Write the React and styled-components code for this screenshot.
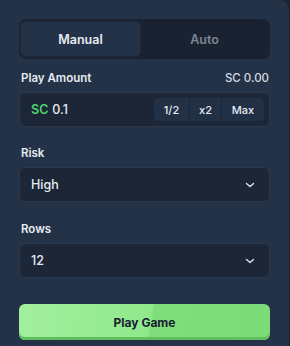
import React, { useState } from "react";
import styled, { createGlobalStyle } from "styled-components";

const GlobalStyle = createGlobalStyle`
  html, body {
    margin: 0;
    padding: 0;
    background: #1b2435;
    font-family: Inter, "Noto Sans", sans-serif;
  }
  * { box-sizing: border-box; }
`;

const Panel = styled.div`
  width: 289px;
  height: 346px;
  background: #243248;
  border-top-right-radius: 10px;
  padding: 19px 19px 0 19px;
  display: flex;
  flex-direction: column;
`;

const Tabs = styled.div`
  display: flex;
  height: 40px;
  padding: 2px 2px 2px 1px;
  background: #1a2231;
  border-radius: 7px;
`;

const Tab = styled.button`
  flex: ${p => (p.active ? "0 0 121px" : "1")};
  border: none;
  border-radius: 6px;
  background: ${p => (p.active ? "#243248" : "transparent")};
  box-shadow: ${p => (p.active ? "inset 0 0 0 1px #1e293a" : "none")};
  color: ${p => (p.active ? "#e6ebf2" : "#7b8596")};
  font-family: inherit;
  font-size: 12.5px;
  font-weight: 600;
  cursor: pointer;
`;

const LabelRow = styled.div`
  display: flex;
  justify-content: space-between;
  align-items: center;
  height: 14px;
  line-height: 14px;
  margin-top: ${p => p.top || 12}px;
  margin-bottom: 7px;
  padding: 0 1px 0 2px;
  color: #e6ebf2;
  font-size: 11.5px;
  font-weight: 600;
`;

const Balance = styled.span`
  color: #d3d9e2;
  font-weight: 500;
`;

const InputBox = styled.div`
  display: flex;
  align-items: center;
  justify-content: space-between;
  height: 35px;
  padding: 0 5px 0 11px;
  background: #1c2637;
  border: 1px solid #2a384d;
  border-radius: 6px;
  color: #e6ebf2;
  font-size: 12.5px;
  font-weight: 500;
`;

const Currency = styled.span`
  color: #4fd06b;
  font-weight: 600;
  margin-right: 4px;
`;

const Chips = styled.div`
  display: flex;
  height: 23px;
  background: #223045;
  border-radius: 5px;
  overflow: hidden;
`;

const Chip = styled.button`
  width: ${p => p.w}px;
  border: none;
  border-left: ${p => (p.first ? "none" : "1px solid #1c2637")};
  background: transparent;
  color: #e6ebf2;
  font-family: inherit;
  font-size: 11px;
  font-weight: 500;
  cursor: pointer;
`;

const Select = styled.div`
  display: flex;
  align-items: center;
  justify-content: space-between;
  height: 35px;
  padding: 0 14px 0 11px;
  background: #1c2637;
  border: 1px solid #2a384d;
  border-radius: 6px;
  color: #e6ebf2;
  font-size: 12.5px;
  font-weight: 500;
`;

const PlayButton = styled.button`
  margin-top: 26px;
  height: 36px;
  border: none;
  border-radius: 6px;
  background: linear-gradient(100deg, #a3ef9f 0%, #8fe98b 52%, #80dd7c 53%, #7bdb78 100%);
  box-shadow: inset 0 -3px 0 #5fbf5e;
  color: #172031;
  font-family: inherit;
  font-size: 12px;
  font-weight: 700;
  cursor: pointer;
`;

const Chevron = () => (
  <svg width="10" height="10" viewBox="0 0 10 10">
    <path d="M1.5 3.5 L5 6.5 L8.5 3.5" fill="none" stroke="#dfe5ee" strokeWidth="1.4" strokeLinecap="round" strokeLinejoin="round" />
  </svg>
);

const App = () => {
  const [mode, setMode] = useState("manual");
  return (
    <>
      <GlobalStyle />
      <Panel>
        <Tabs>
          <Tab active={mode === "manual"} onClick={() => setMode("manual")}>Manual</Tab>
          <Tab active={mode === "auto"} onClick={() => setMode("auto")}>Auto</Tab>
        </Tabs>
        <LabelRow top={12}>
          <span>Play Amount</span>
          <Balance>SC 0.00</Balance>
        </LabelRow>
        <InputBox>
          <span><Currency>SC</Currency>0.1</span>
          <Chips>
            <Chip first w={35}>1/2</Chip>
            <Chip w={32}>x2</Chip>
            <Chip w={43}>Max</Chip>
          </Chips>
        </InputBox>
        <LabelRow top={19}>
          <span>Risk</span>
        </LabelRow>
        <Select>
          <span>High</span>
          <Chevron />
        </Select>
        <LabelRow top={20}>
          <span>Rows</span>
        </LabelRow>
        <Select>
          <span>12</span>
          <Chevron />
        </Select>
        <PlayButton>Play Game</PlayButton>
      </Panel>
    </>
  );
};

export default App;
